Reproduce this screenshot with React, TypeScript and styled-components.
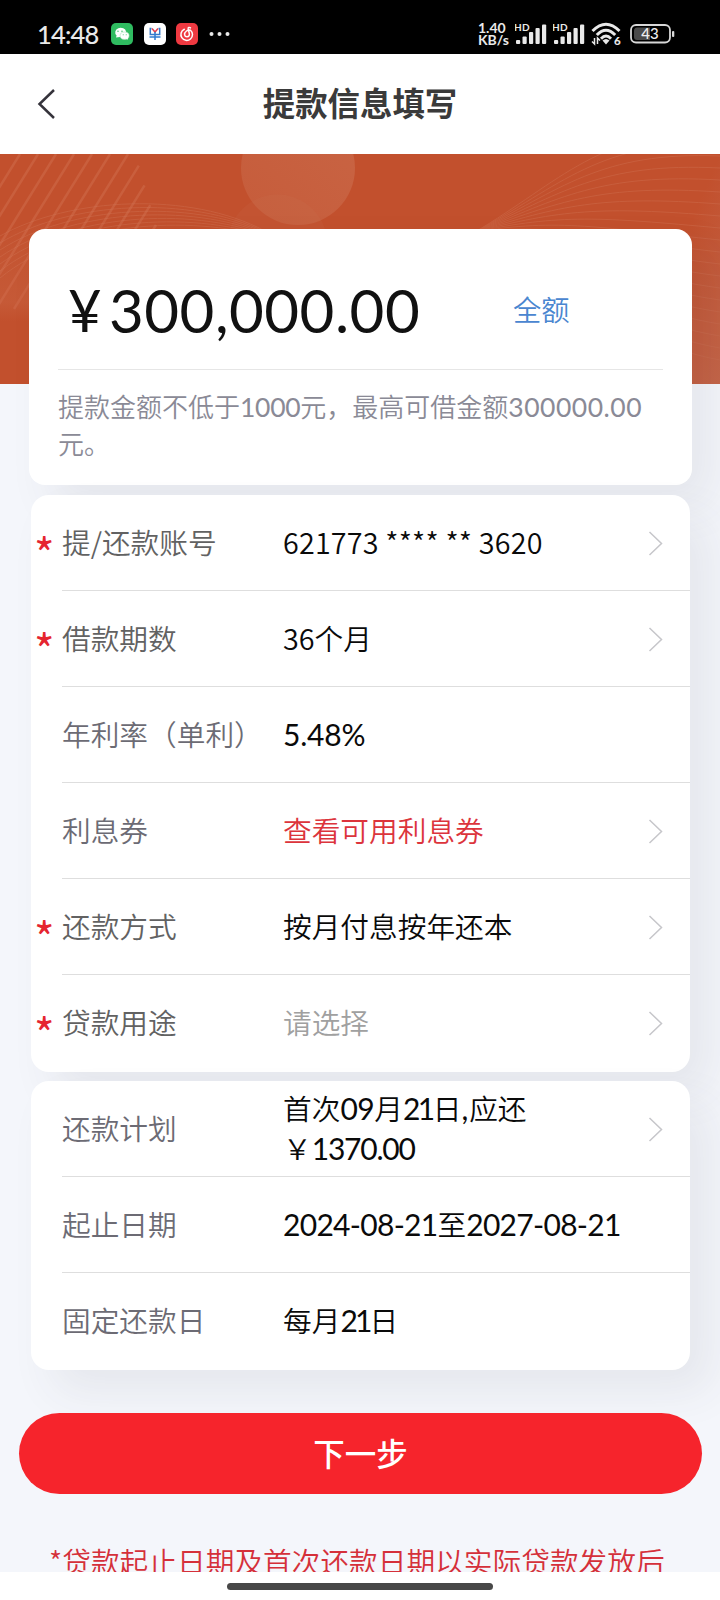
import React from 'react';
import styled, { createGlobalStyle } from 'styled-components';

const CJK = '"Noto Sans CJK SC", "Noto Sans", sans-serif';
const ROUND = 'Lato, "Noto Sans CJK SC", sans-serif';

const GlobalStyle = createGlobalStyle`
  * { box-sizing: border-box; }
  body { margin: 0; background: #fff; font-family: ${CJK}; }
`;

const Screen = styled.div`
  width: 720px;
  height: 1600px;
  overflow: hidden;
  display: flex;
  flex-direction: column;
  background: #fff;
`;

const StatusBar = styled.header`
  height: 54px;
  flex: none;
  background: #000;
  color: #e9e9e9;
  display: flex;
  align-items: flex-start;
  justify-content: space-between;
  padding: 22px 45px 0 37px;
`;

const StatusGroup = styled.div<{ $gap: number }>`
  display: flex;
  align-items: center;
  height: 24px;
  gap: ${(p) => p.$gap}px;
`;

const Clock = styled.span`
  font: 500 25.5px/24px ${ROUND};
  letter-spacing: -0.8px;
  width: 63.5px;
  white-space: nowrap;
`;

const Speed = styled.div`
  width: 32px;
  font: 700 14px/12.5px ${ROUND};
  white-space: nowrap;
  text-align: left;
`;

const NavBar = styled.nav`
  height: 100px;
  flex: none;
  display: grid;
  grid-template-columns: 80px 1fr 80px;
  align-items: center;
  background: #fff;
`;

const BackButton = styled.button`
  border: 0;
  background: none;
  padding: 0 0 0 37px;
  height: 100px;
  display: flex;
  align-items: center;
`;

const Title = styled.h1`
  margin: 0 0 4px;
  text-align: center;
  font: 600 32.4px/48px ${CJK};
  color: #3a3a3a;
`;

const Content = styled.main`
  height: 1418px;
  flex: none;
  overflow: hidden;
  background: #f4f6fb;
  display: grid;
  grid-template: 1418px / 720px;
`;

const Banner = styled.svg`
  grid-area: 1 / 1;
  display: block;
`;

const Stack = styled.div`
  grid-area: 1 / 1;
  padding-top: 75px;
  display: flex;
  flex-direction: column;
  z-index: 1;
`;

const Card = styled.section`
  margin: 0 30px 9px 31px;
  padding-bottom: 1px;
  flex: none;
  background: #fff;
  border-radius: 18px;
  box-shadow: 22px 22px 44px rgba(66, 62, 80, 0.08);
`;

const AmountCard = styled(Card)`
  margin: 0 28px 10px 29px;
  height: 256px;
  border-radius: 16px;
  padding: 0 29px;
`;

const AmountLine = styled.div`
  height: 141px;
  border-bottom: 1px solid #e6e6e6;
  display: flex;
  align-items: center;
  padding-top: 22px;
  color: #111;
`;

const Yen = styled.span`
  font: 400 58px/80px ${ROUND};
  width: 51px;
  padding-left: 10px;
`;

const Amount = styled.span`
  font: 400 60px/80px ${ROUND};
  letter-spacing: 0.5px;
  width: 404px;
`;

const AllLink = styled.a`
  font: 350 28.3px/40px ${CJK};
  padding-bottom: 2px;
  color: #4a86d0;
`;

const Hint = styled.p`
  margin: 17px 0 0;
  font: 350 26px/37px ${CJK};
  color: #8a8a96;
`;

const Num = styled.span<{ $size: number; $track: number }>`
  font-family: ${ROUND};
  font-weight: 400;
  font-size: ${(p) => p.$size}px;
  letter-spacing: ${(p) => p.$track}px;
  line-height: 1;
`;

const AccountNumber = styled.span`
  letter-spacing: 0.2px;
`;

const RowBox = styled.div`
  height: 96px;
  display: flex;
  align-items: center;
  &:last-child > div { border-bottom-color: transparent; }
`;

const Mark = styled.span`
  width: 31px;
  flex: none;
  padding: 18px 0 0 3px;
  font: 400 44px/40px ${CJK};
  color: #e5252f;
`;

const RowBody = styled.div`
  flex: 1;
  height: 96px;
  border-bottom: 1px solid #dedede;
  display: flex;
  align-items: center;
  padding-right: 27px;
`;

const Label = styled.span<{ $cool?: boolean }>`
  width: 221px;
  flex: none;
  padding-bottom: 1px;
  font: 350 28.7px/40px ${CJK};
  color: ${(p) => (p.$cool ? '#6c6b74' : '#626262')};
  white-space: nowrap;
`;

const Value = styled.span<{ $color?: string }>`
  flex: 1;
  padding-bottom: 1px;
  font: 350 28.7px/40px ${CJK};
  color: ${(p) => p.$color || '#0a0a0a'};
  white-space: nowrap;
`;

const NextButton = styled.button`
  margin: 34px 18px 0 19px;
  height: 81px;
  flex: none;
  border: 0;
  border-radius: 41px;
  background: #f6242c;
  color: #fff;
  font: 500 31.5px/46px ${CJK};
  padding: 0 0 4px;
`;

const Note = styled.p`
  margin: 46px 0 0 49px;
  flex: none;
  font: 350 28.7px/42px ${CJK};
  color: #d5303a;
  white-space: nowrap;
`;

const HomeArea = styled.footer`
  flex: 1;
  display: flex;
  justify-content: center;
  padding-top: 11px;
`;

const HomeBar = styled.div`
  width: 266px;
  height: 7px;
  border-radius: 4px;
  background: #484848;
`;

const Signal = () => (
  <svg width="33" height="24" viewBox="0 0 33 24" fill="#e9e9e9">
    <text x="-1" y="9.4" fontFamily="Lato" fontSize="10" fontWeight="700" textLength="15.5">HD</text>
    <rect x="1" y="18" width="4.200" height="4" rx="1" />
    <rect x="7.500" y="14.5" width="4.200" height="7.5" rx="1" />
    <rect x="14" y="10" width="4.200" height="12" rx="1" />
    <rect x="20.5" y="6" width="4.200" height="16" rx="1" />
    <rect x="27" y="2.5" width="4.200" height="19.5" rx="1" />
  </svg>
);

const Wifi = () => (
  <svg width="34" height="24" viewBox="0 0 34 24" fill="none" stroke="#e9e9e9">
    <path d="M1.5 9Q15 -4.5 28.5 9" strokeWidth="3" />
    <path d="M5.8 13Q15 3.500 24.200 13" strokeWidth="3" />
    <path d="M10 16.700Q15 11.500 20 16.700" strokeWidth="3" />
    <path d="M11.500 18.500Q15 15.500 18.500 18.500L15 22.500Z" fill="#e9e9e9" stroke="none" />
    <path d="M3.500 16V22L1 19.500M6.500 22V16L9 18.500" strokeWidth="1.500" />
    <text x="23" y="22.800" fontFamily="Lato" fontSize="11.500" fontWeight="900" fill="#e9e9e9" stroke="none">6</text>
  </svg>
);

const Battery = () => (
  <svg width="45" height="24" viewBox="0 0 45 24">
    <rect x="1" y="3" width="39" height="17.500" rx="5" fill="none" stroke="#d8d8d8" strokeWidth="1.800" />
    <path d="M7 5.500H20V18H7Q4 18 4 15V9Q4 5.500 7 5.500Z" fill="#4a4a4a" />
    <rect x="42" y="9" width="2.300" height="6" rx="1" fill="#d8d8d8" />
    <text x="20" y="17.400" textAnchor="middle" fontFamily="Lato" fontSize="15" fontWeight="500" fill="#eee">43</text>
  </svg>
);

const WeChat = () => (
  <svg width="22" height="22" viewBox="0 0 22 22">
    <rect width="22" height="22" rx="5" fill="#2fbb60" />
    <path d="M5 14.500L5.600 12.500A5.500 4.600 0 1 1 9 14Z" fill="#fff" />
    <ellipse cx="13.600" cy="12.700" rx="4.500" ry="3.700" fill="#fff" stroke="#a8dfb9" strokeWidth=".6" />
    <path d="M15 15.500L17 16.800L16.700 14.500Z" fill="#fff" />
    <g fill="#2fbb60"><circle cx="7" cy="8.300" r=".7" /><circle cx="11" cy="8.300" r=".7" /><circle cx="12.200" cy="11.800" r=".5" /><circle cx="15.200" cy="11.800" r=".5" /></g>
  </svg>
);

const BankApp = () => (
  <svg width="22" height="22" viewBox="0 0 22 22" fill="none" strokeWidth="1.500">
    <rect width="22" height="22" rx="5" fill="#fff" />
    <path d="M7.500 5.500H6.300V11.500H15.700V5.500H14.500" stroke="#3578c8" />
    <path d="M8 5.500L11 9L14 5.500" stroke="#df4050" />
    <path d="M5.500 14H16.500M11 9V17" stroke="#2d7bd1" />
  </svg>
);

const Music = () => (
  <svg width="22" height="22" viewBox="0 0 22 22" fill="none" stroke="#fff" strokeWidth="1.500" strokeLinecap="round">
    <rect width="22" height="22" rx="5" fill="#ef3941" stroke="none" />
    <path d="M8.300 6.300A5.800 5.800 0 1 0 14.500 7.200Q12.500 6.500 10.500 8C7.200 10.500 8.600 13.800 11 13.800C13.200 13.800 13.700 12 13.200 10L12.200 6C11.900 4.500 13.300 4 14.500 4.900" />
  </svg>
);

const Dots = () => (
  <svg width="22" height="6" viewBox="0 0 22 6" fill="#e9e9e9">
    <circle cx="2.500" cy="3" r="2" /><circle cx="10.500" cy="3" r="2" /><circle cx="18.500" cy="3" r="2" />
  </svg>
);

const Chevron = () => (
  <svg width="15" height="26" viewBox="0 0 15 26" fill="none" stroke="#c6c6ca" strokeWidth="1.500">
    <path d="M1.500 2L13.500 13.500L1.500 25" />
  </svg>
);

const stripes = Array.from({ length: 13 }, (_, i) => i);
const waves = Array.from({ length: 20 }, (_, i) => i);

const BannerArt = () => (
  <Banner width="720" height="230" viewBox="0 0 720 230">
    <defs>
      <linearGradient id="glow" x1="1" y1="0" x2="0" y2="1">
        <stop offset="0" stopColor="#d28063" stopOpacity=".42" />
        <stop offset="1" stopColor="#d28063" stopOpacity=".25" />
      </linearGradient>
      <linearGradient id="edge" x1="0" y1="0" x2="1" y2="1">
        <stop offset=".5" stopColor="#c46a50" stopOpacity="0" />
        <stop offset="1" stopColor="#c46a50" stopOpacity=".8" />
      </linearGradient>
      <linearGradient id="fade" x1="0" y1="0" x2="0" y2="1">
        <stop offset="0" stopColor="#d17655" stopOpacity=".05" />
        <stop offset=".8" stopColor="#d17655" stopOpacity=".25" />
        <stop offset="1" stopColor="#d17655" stopOpacity="0" />
      </linearGradient>
    </defs>
    <rect width="720" height="230" fill="#c2502d" />
    <path d="M0 85Q30 62 60 72V168H0Z" fill="url(#fade)" />
    <circle cx="298" cy="14" r="57" fill="url(#glow)" />
    <path d="M230 75A50 50 0 0 1 325 75Z" fill="#d28063" opacity=".1" />
    <g stroke="#cf6949" strokeWidth="2.500" opacity=".6">
      {stripes.map((i) => {
        const top = 20 + i * 18;
        const start = top > 140 ? (top - 140) * 1.100 + 5 : 0;
        return <line key={i} x1={top - start * 0.620} y1={start} x2={top - 96} y2={155} />;
      })}
    </g>
    <g fill="none" stroke="#d4795a" strokeWidth="1" opacity=".35">
      {waves.slice(0, 7).map((i) => (
        <path key={i} d={`M0 ${82 + i * 7}C70 ${43 + i * 4} 190 ${37 + i * 4} 265 ${77 + i}`} />
      ))}
      {waves.map((i) => (
        <path key={i} d={`M475 78C560 ${28 + i * 4} 600 ${-25 + i * 11} 720 ${-22 + i * 12}`} />
      ))}
    </g>
    <rect x="620" width="100" height="230" fill="url(#edge)" />
  </Banner>
);

type RowProps = {
  label: string;
  required?: boolean;
  arrow?: boolean;
  color?: string;
  children: React.ReactNode;
};

const Row = ({ label, required, arrow, color, children }: RowProps) => (
  <RowBox>
    <Mark>{required ? '*' : ''}</Mark>
    <RowBody>
      <Label $cool={!required}>{label}</Label>
      <Value $color={color}>{children}</Value>
      {arrow && <Chevron />}
    </RowBody>
  </RowBox>
);

export default function App() {
  return (
    <Screen>
      <GlobalStyle />
      <StatusBar>
        <StatusGroup $gap={10.5}>
          <Clock>14:48</Clock>
          <WeChat />
          <BankApp />
          <Music />
          <Dots />
        </StatusGroup>
        <StatusGroup $gap={5}>
          <Speed>1.40<br />KB/s</Speed>
          <Signal />
          <Signal />
          <Wifi />
          <Battery />
        </StatusGroup>
      </StatusBar>
      <NavBar>
        <BackButton aria-label="返回">
          <svg width="18" height="30" viewBox="0 0 18 30" fill="none" stroke="#35333b" strokeWidth="2.500">
            <path d="M17 1L2.500 15L17 29" />
          </svg>
        </BackButton>
        <Title>提款信息填写</Title>
      </NavBar>
      <Content>
        <BannerArt />
        <Stack>
          <AmountCard>
            <AmountLine>
              <Yen>¥</Yen>
              <Amount>300,000.00</Amount>
              <AllLink>全额</AllLink>
            </AmountLine>
            <Hint>
              提款金额不低于<Num $size={26.5} $track={-0.3}>1000</Num>元，最高可借金额<Num $size={26.5} $track={0.5}>300000.00</Num>
              <br />
              元。
            </Hint>
          </AmountCard>
          <Card>
            <Row label="提/还款账号" required arrow><AccountNumber>621773 **** ** 3620</AccountNumber></Row>
            <Row label="借款期数" required arrow>36个月</Row>
            <Row label="年利率（单利）"><Num $size={30} $track={-0.2}>5.48%</Num></Row>
            <Row label="利息券" arrow color="#dc343c">查看可用利息券</Row>
            <Row label="还款方式" required arrow>按月付息按年还本</Row>
            <Row label="贷款用途" required arrow color="#a0a0a0">请选择</Row>
          </Card>
          <Card>
            <Row label="还款计划" arrow>
              首次<Num $size={30} $track={-0.5}>09</Num>月<Num $size={30} $track={-2.5}>21</Num>日<Num $size={30} $track={1}>,</Num>应还
              <br />
              ￥<Num $size={30} $track={-1.2}>1370.00</Num>
            </Row>
            <Row label="起止日期">
              <Num $size={30} $track={-0.7}>2024-08-21</Num>至<Num $size={30} $track={-0.7}>2027-08-21</Num>
            </Row>
            <Row label="固定还款日">每月<Num $size={30} $track={-2.8}>21</Num>日</Row>
          </Card>
          <NextButton>下一步</NextButton>
          <Note>*贷款起止日期及首次还款日期以实际贷款发放后</Note>
        </Stack>
      </Content>
      <HomeArea>
        <HomeBar />
      </HomeArea>
    </Screen>
  );
}
